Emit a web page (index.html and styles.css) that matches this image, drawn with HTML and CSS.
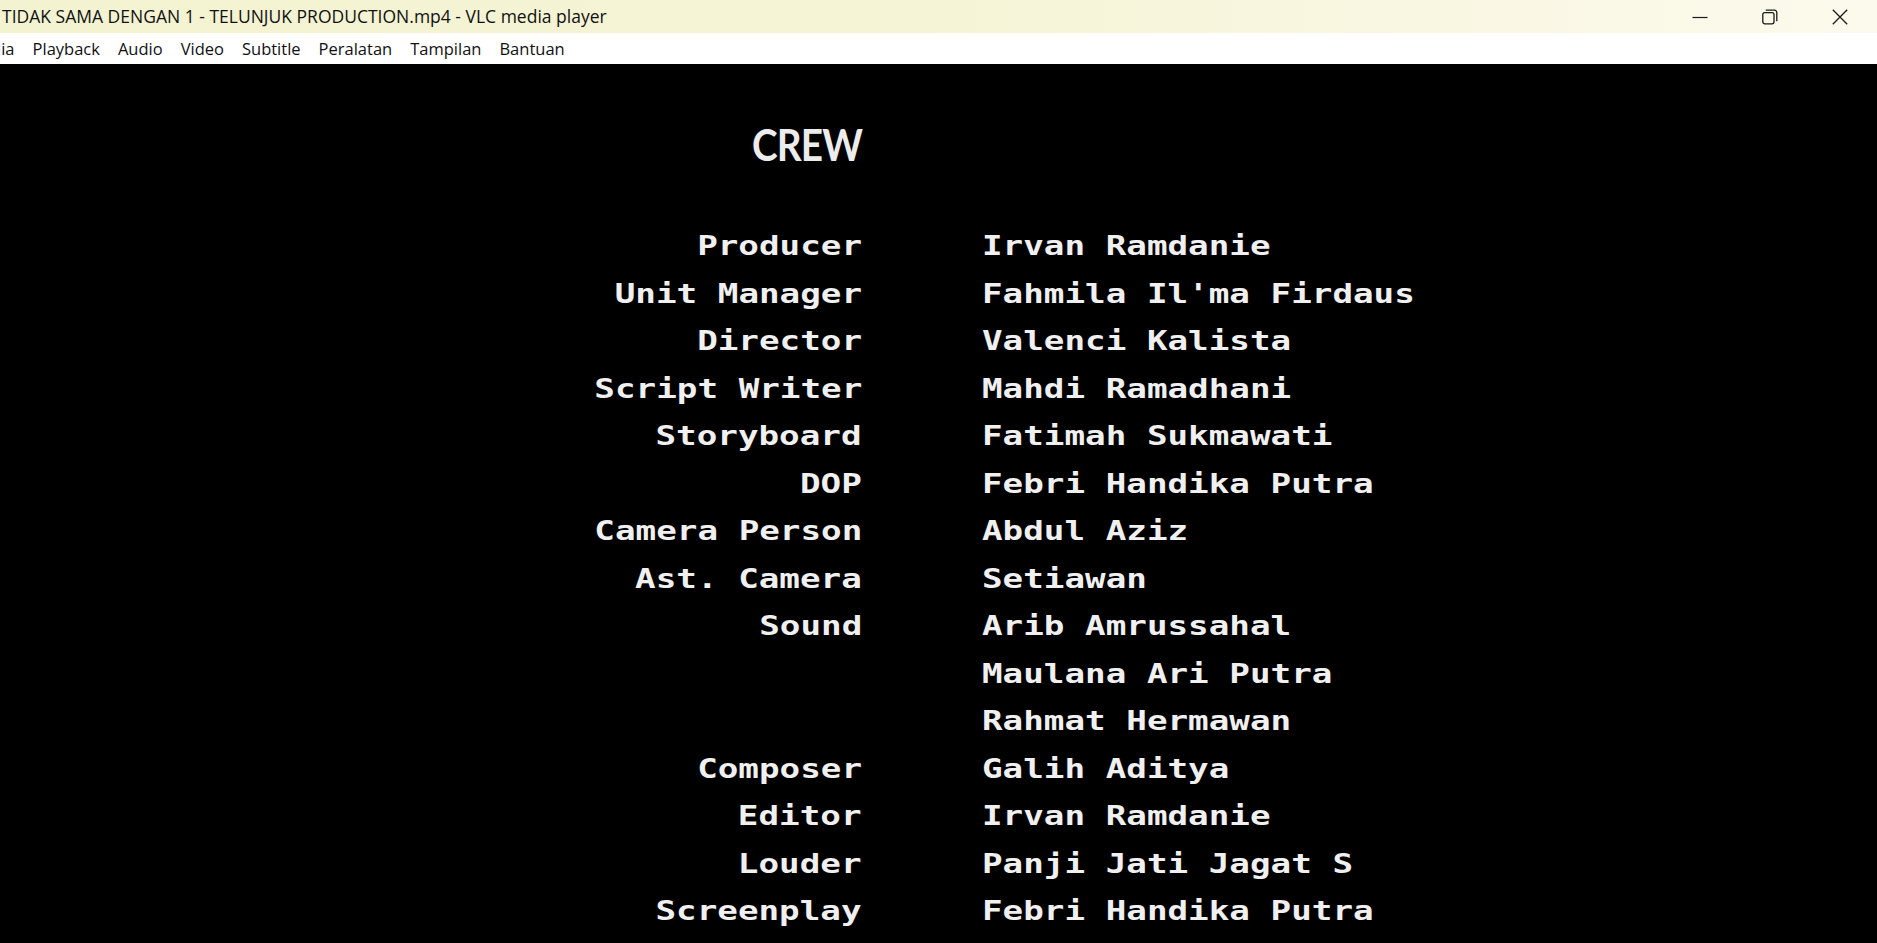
FILE: index.html
```html
<!DOCTYPE html>
<html lang="id">
<head>
<meta charset="utf-8">
<title>VLC media player</title>
<link rel="stylesheet" href="styles.css">
</head>
<body>
<div class="window">
  <header class="titlebar">
    <div class="title">TIDAK SAMA DENGAN 1 - TELUNJUK PRODUCTION.mp4 - VLC media player</div>
    <div class="controls">
      <div class="ctl">
        <svg width="16" height="16" viewBox="0 0 16 16"><path d="M0.5 8.5 H15.5" stroke="#1b1b1b" stroke-width="1.2" fill="none"/></svg>
      </div>
      <div class="ctl">
        <svg width="16" height="16" viewBox="0 0 16 16" fill="none" stroke="#1b1b1b" stroke-width="1.3">
          <rect x="0.8" y="3.6" width="11.2" height="11.2" rx="2"/>
          <path d="M3.8 1.2 H12.6 A2.2 2.2 0 0 1 14.8 3.4 V12.2"/>
        </svg>
      </div>
      <div class="ctl">
        <svg width="16" height="16" viewBox="0 0 16 16"><path d="M0.8 0.8 L15.2 15.2 M15.2 0.8 L0.8 15.2" stroke="#1b1b1b" stroke-width="1.3" fill="none"/></svg>
      </div>
    </div>
  </header>
  <nav class="menubar">
    <span class="menu first">Media</span>
    <span class="menu">Playback</span>
    <span class="menu">Audio</span>
    <span class="menu">Video</span>
    <span class="menu">Subtitle</span>
    <span class="menu">Peralatan</span>
    <span class="menu">Tampilan</span>
    <span class="menu">Bantuan</span>
  </nav>
  <main class="video">
    <h1 class="crew"><span>CREW</span></h1>
    <div class="credits">
      <div class="role"><span>Producer</span></div><div class="name"><span>Irvan Ramdanie</span></div>
      <div class="role"><span>Unit Manager</span></div><div class="name"><span>Fahmila Il'ma Firdaus</span></div>
      <div class="role"><span>Director</span></div><div class="name"><span>Valenci Kalista</span></div>
      <div class="role"><span>Script Writer</span></div><div class="name"><span>Mahdi Ramadhani</span></div>
      <div class="role"><span>Storyboard</span></div><div class="name"><span>Fatimah Sukmawati</span></div>
      <div class="role"><span>DOP</span></div><div class="name"><span>Febri Handika Putra</span></div>
      <div class="role"><span>Camera Person</span></div><div class="name"><span>Abdul Aziz</span></div>
      <div class="role"><span>Ast. Camera</span></div><div class="name"><span>Setiawan</span></div>
      <div class="role"><span>Sound</span></div><div class="name"><span>Arib Amrussahal</span></div>
      <div class="role"></div><div class="name"><span>Maulana Ari Putra</span></div>
      <div class="role"></div><div class="name"><span>Rahmat Hermawan</span></div>
      <div class="role"><span>Composer</span></div><div class="name"><span>Galih Aditya</span></div>
      <div class="role"><span>Editor</span></div><div class="name"><span>Irvan Ramdanie</span></div>
      <div class="role"><span>Louder</span></div><div class="name"><span>Panji Jati Jagat S</span></div>
      <div class="role"><span>Screenplay</span></div><div class="name"><span>Febri Handika Putra</span></div>
    </div>
  </main>
</div>
</body>
</html>
```

FILE: styles.css
```css
html, body {
  margin: 0;
  padding: 0;
  width: 1877px;
  height: 943px;
  overflow: hidden;
  background: #000;
}

.window {
  display: flex;
  flex-direction: column;
  height: 943px;
}

.titlebar {
  height: 33px;
  flex: 0 0 33px;
  display: flex;
  align-items: stretch;
  justify-content: space-between;
  background: linear-gradient(to right, #f3f3d1 0%, #f5f4d6 50%, #faf8e6 85%, #fbfaec 100%);
  font-family: "Open Sans", "Noto Sans", sans-serif;
  color: #111;
}

.title {
  padding-left: 2px;
  font-size: 17.5px;
  line-height: 33px;
  white-space: nowrap;
}

.controls {
  display: flex;
  padding-right: 2px;
}

.ctl {
  width: 70px;
  display: flex;
  align-items: center;
  justify-content: center;
}

.menubar {
  height: 31px;
  flex: 0 0 31px;
  display: flex;
  align-items: center;
  background: #fff;
  font-family: "Open Sans", "Noto Sans", sans-serif;
  font-size: 16.5px;
  color: #111;
  overflow: hidden;
  white-space: nowrap;
}

.menu {
  padding: 0 9px;
}

.menu.first {
  margin-left: -42px;
}

.video {
  flex: 1;
  background: #000;
  color: #f2f2f2;
  padding-top: 59px;
  overflow: hidden;
}

.crew {
  width: 862px;
  margin: 0;
  text-align: right;
  font-family: Lato, "Open Sans", sans-serif;
  font-weight: 700;
  font-size: 44px;
  line-height: 43px;
  letter-spacing: -1px;
  color: #ececec;
}

.crew span {
  display: inline-block;
  transform: scaleX(0.88);
  transform-origin: right center;
}

.credits {
  margin-top: 56px;
  display: grid;
  grid-template-columns: 862px 1fr;
  column-gap: 120px;
  grid-auto-rows: 47.5px;
  font-family: "DejaVu Sans Mono", "Liberation Mono", monospace;
  font-weight: 700;
  font-size: 27px;
  line-height: 47.5px;
  color: #f0f0f0;
}

.role {
  text-align: right;
  white-space: nowrap;
}

.name {
  white-space: nowrap;
}

.role span,
.name span {
  display: inline-block;
  transform: scaleX(1.268);
}

.role span {
  transform-origin: right center;
}

.name span {
  transform-origin: left center;
}
```
